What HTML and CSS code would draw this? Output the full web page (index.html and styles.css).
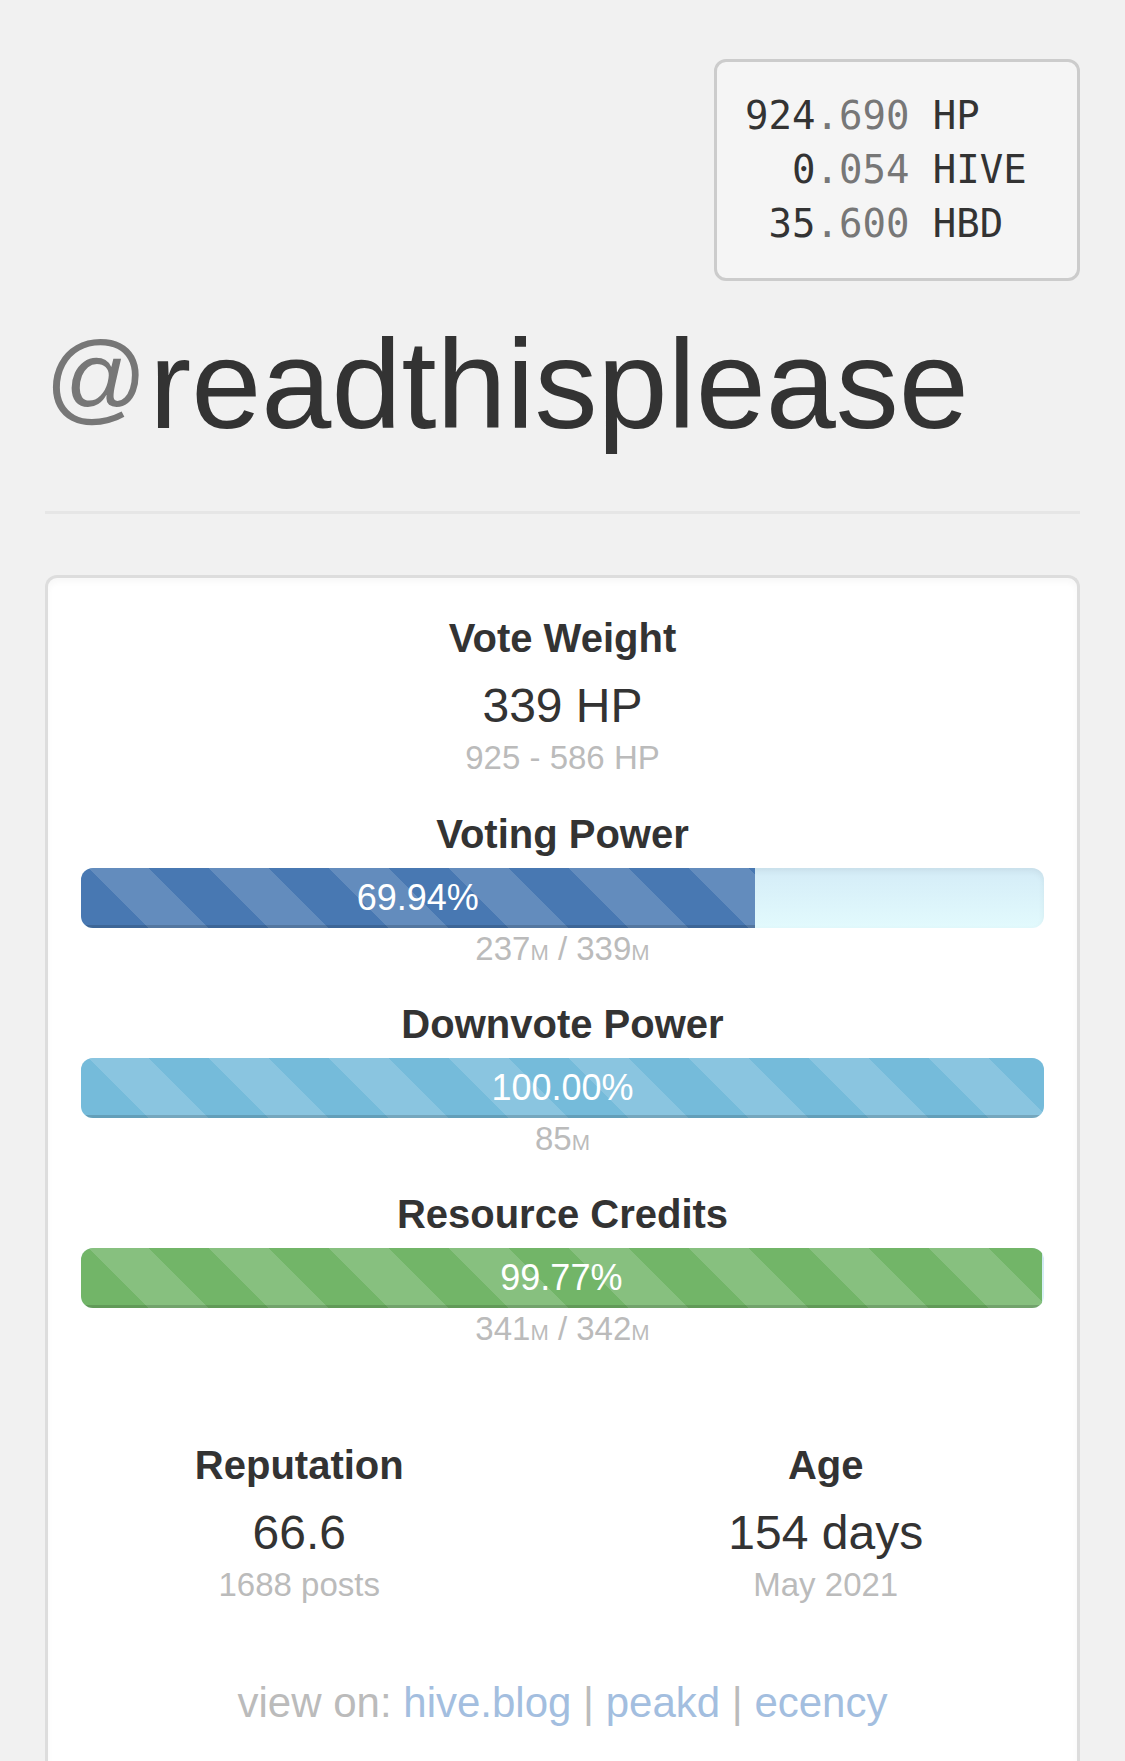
FILE: index.html
```html
<!DOCTYPE html>
<html>
<head>
<meta charset="utf-8">
<title>@readthisplease</title>
<link rel="stylesheet" href="styles.css">
</head>
<body>
<div class="container">
  <div class="top">
    <pre class="balances"><span class="int">924</span><span class="dec">.690</span> HP
  <span class="int">0</span><span class="dec">.054</span> HIVE
 <span class="int">35</span><span class="dec">.600</span> HBD</pre>
  </div>
  <h1 class="title"><span class="at">@</span>readthisplease</h1>
  <hr class="rule">
  <div class="panel">
    <div class="stat">
      <div class="label">Vote Weight</div>
      <div class="value">339 HP</div>
      <div class="sub">925 - 586 HP</div>
    </div>
    <div class="stat gap">
      <div class="label">Voting Power</div>
      <div class="progress"><div class="bar bar-blue" style="width:69.94%">69.94%</div></div>
      <div class="sub tight">237<small>M</small> / 339<small>M</small></div>
    </div>
    <div class="stat gap">
      <div class="label">Downvote Power</div>
      <div class="progress"><div class="bar bar-cyan" style="width:100%">100.00%</div></div>
      <div class="sub tight">85<small>M</small></div>
    </div>
    <div class="stat gap">
      <div class="label">Resource Credits</div>
      <div class="progress"><div class="bar bar-green" style="width:99.77%">99.77%</div></div>
      <div class="sub tight">341<small>M</small> / 342<small>M</small></div>
    </div>
    <div class="row">
      <div class="col">
        <div class="label">Reputation</div>
        <div class="value">66.6</div>
        <div class="sub">1688 posts</div>
      </div>
      <div class="col">
        <div class="label">Age</div>
        <div class="value">154 days</div>
        <div class="sub">May 2021</div>
      </div>
    </div>
    <div class="links">view on: <a href="#">hive.blog</a> <span class="pipe">|</span> <a href="#">peakd</a> <span class="pipe">|</span> <a href="#">ecency</a></div>
  </div>
</div>
</body>
</html>
```
FILE: styles.css
```css
html, body {
  margin: 0;
  padding: 0;
  background: #f1f1f1;
}
body {
  font-family: "Liberation Sans", Arial, Helvetica, sans-serif;
  color: #333;
}
.container {
  padding: 0 45px;
}
.top {
  display: flex;
  justify-content: flex-end;
  padding-top: 59px;
}
.balances {
  box-sizing: border-box;
  width: 366px;
  margin: 0;
  padding: 27px 28px;
  background: #f5f5f5;
  border: 3px solid #cccccc;
  border-radius: 12px;
  font-family: "DejaVu Sans Mono", "Liberation Mono", monospace;
  font-size: 39px;
  line-height: 54px;
  color: #333;
}
.balances .dec {
  color: #777;
}
.title {
  margin: 34px 0 0;
  font-size: 126px;
  line-height: 139px;
  font-weight: normal;
  color: #333;
  white-space: nowrap;
}
.title .at {
  color: #777;
  font-size: 0.8em;
  vertical-align: 0.16em;
  line-height: 0;
  margin-right: 2px;
}
.rule {
  margin: 57px 0 0;
  border: 0;
  border-top: 3px solid #e6e6e6;
  height: 0;
}
.panel {
  margin-top: 61px;
  background: #fff;
  border: 3px solid #dddddd;
  border-bottom: 0;
  border-radius: 12px 12px 0 0;
  box-shadow: inset 0 4px 6px rgba(0,0,0,0.03);
  padding: 38px 33px 120px;
  text-align: center;
}
.label {
  font-size: 40px;
  line-height: 44px;
  font-weight: bold;
  color: #333;
}
.value {
  margin-top: 19px;
  font-size: 48px;
  line-height: 53px;
  color: #333;
}
.sub {
  margin-top: 6px;
  font-size: 33px;
  line-height: 40px;
  color: #bbbbbb;
}
.sub small {
  font-size: 22px;
}
.sub.tight {
  margin-top: 1px;
}
.stat.gap {
  margin-top: 34px;
}
.stat.gap + .stat.gap {
  margin-top: 29px;
}
.progress {
  margin-top: 12px;
  height: 60px;
  border-radius: 12px;
  overflow: hidden;
  background: linear-gradient(to bottom, #d4ecf7 0%, #e2fafd 100%);
  box-shadow: inset 0 3px 6px rgba(0,0,0,0.06);
  display: flex;
}
.bar {
  height: 60px;
  line-height: 60px;
  font-size: 36px;
  color: #fff;
  text-align: center;
  box-shadow: inset 0 -3px 0 rgba(0,0,0,0.15);
  background-image: linear-gradient(45deg, rgba(255,255,255,.15) 25%, transparent 25%, transparent 50%, rgba(255,255,255,.15) 50%, rgba(255,255,255,.15) 75%, transparent 75%, transparent);
  background-size: 120px 120px;
  background-position: 8px 0;
}
.bar-blue { background-color: #4878b2; }
.bar-cyan { background-color: #75bbda; }
.bar-green { background-color: #72b568; }
.row {
  display: grid;
  grid-template-columns: 1fr 1fr;
  margin: 90px -45px 0;
}
.col {
  padding: 0 45px;
}
.links {
  margin-top: 73px;
  font-size: 42px;
  line-height: 50px;
  color: #bbbbbb;
}
.links a {
  color: #a3bedf;
  text-decoration: none;
}
.links .pipe {
  color: #bbbbbb;
}
```
